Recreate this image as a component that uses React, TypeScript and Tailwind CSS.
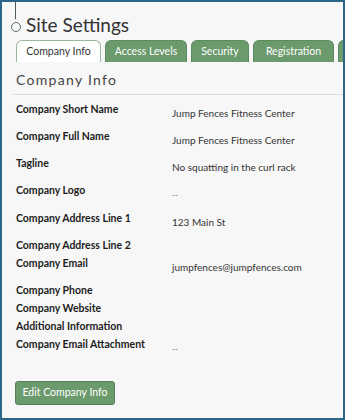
import React from "react";

const rows: { label: string; value?: string }[] = [
  { label: "Company Short Name", value: "Jump Fences Fitness Center" },
  { label: "Company Full Name", value: "Jump Fences Fitness Center" },
  { label: "Tagline", value: "No squatting in the curl rack" },
  { label: "Company Logo", value: "--" },
  { label: "Company Address Line 1", value: "123 Main St" },
  { label: "Company Address Line 2" },
  { label: "Company Email", value: "jumpfences@jumpfences.com" },
  { label: "Company Phone" },
  { label: "Company Website" },
  { label: "Additional Information" },
  { label: "Company Email Attachment", value: "--" },
];

const tabs = [
  { name: "Company Info", w: "w-[85px]" },
  { name: "Access Levels", w: "w-[82px]" },
  { name: "Security", w: "w-[58px]" },
  { name: "Registration", w: "w-[81px]" },
  { name: "", w: "w-[20px]" },
];

export default function App() {
  return (
    <div
      className="w-[345px] h-[420px] overflow-hidden bg-[#f7f7f7] border-2 border-[#2b6587] text-[#222]"
      style={{ fontFamily: "Lato, 'Open Sans', sans-serif" }}
    >
      <div className="relative">
        <div className="absolute left-[12.5px] top-0 w-[1.5px] h-[17px] bg-[#4d5f4d]" />
        <div className="flex items-center pl-[9px] pt-[10px] h-[36px]">
          <div className="w-[10px] h-[10px] rounded-full border-[1.5px] border-[#5d6f5d] mr-[5px] mt-[4px]" />
          <div className="text-[19px] leading-[24px] text-[#333]">Site Settings</div>
        </div>
        <div className="flex pl-[14px] gap-[4px] mt-[2px] h-[22px] whitespace-nowrap">
          {tabs.map((t, i) =>
            i === 0 ? (
              <div
                key={i}
                className={`${t.w} shrink-0 h-[22px] bg-white border border-b-0 border-[#9bb79b] rounded-t-[6px] text-[10.5px] text-[#333] flex items-center justify-center`}
              >
                {t.name}
              </div>
            ) : (
              <div
                key={i}
                className={`${t.w} shrink-0 h-[22px] bg-[#6b9a6d] border border-b-0 border-[#5d8a5f] rounded-t-[6px] text-[10.5px] text-white flex items-center justify-center`}
              >
                {t.name}
              </div>
            )
          )}
        </div>
        <div className="ml-[11px] border-b border-[#dcdcdc] h-[33px] flex items-center pl-[3px] pt-[3px]">
          <div className="text-[14px] tracking-[1.3px] text-[#444]">Company Info</div>
        </div>
        <div className="pl-[14px] pt-[5px]">
          {rows.map((r) => (
            <div key={r.label} className="flex">
              <div className="w-[156px] shrink-0 font-bold text-[10.5px] leading-[18px] text-[#1d1d1d]">
                {r.label}
              </div>
              {r.value && (
                <div className="pt-[4px] pb-[5px] text-[10px] leading-[18px] text-[#333]">
                  {r.value === "--" ? <span className="text-[8px] text-[#666]">--</span> : r.value}
                </div>
              )}
            </div>
          ))}
        </div>
        <div className="pl-[13px] mt-[15px]">
          <button className="w-[100px] h-[24px] bg-[#6b9a6d] border border-[#54805a] rounded-[3px] text-white text-[10.5px]">
            Edit Company Info
          </button>
        </div>
      </div>
    </div>
  );
}
